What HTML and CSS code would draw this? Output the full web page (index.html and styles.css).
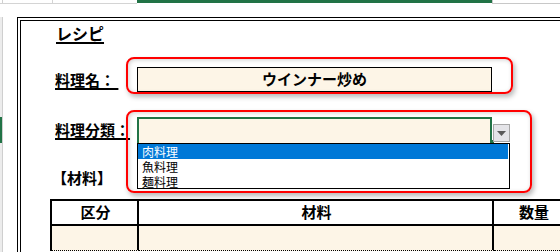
FILE: index.html
```html
<!DOCTYPE html>
<html lang="ja">
<head>
<meta charset="utf-8">
<link rel="stylesheet" href="styles.css">
</head>
<body>
<div class="sheet">
  <div class="top"><span class="t1"></span><span class="t2"></span><span class="t3"></span></div>
  <div class="middle">
    <div class="gutter"><span class="rowsel"></span></div>
    <div class="frame">
      <div class="title"><span class="ul">レシピ</span></div>

      <div class="frow r1">
        <div class="label"><span class="ul">料理名：&nbsp;</span></div>
        <div class="cell name">ウインナー炒め</div>
      </div>

      <div class="frow r2">
        <div class="label"><span class="ul">料理分類：</span></div>
        <div class="cell cat">
          <span class="handle"></span>
          <span class="ddbtn"><svg width="9" height="5" viewBox="0 0 9 5"><path d="M0 0H9L4.5 5Z" fill="#595959"/></svg></span>
          <ul class="list">
            <li class="on">肉料理</li>
            <li>魚料理</li>
            <li>麺料理</li>
          </ul>
        </div>
      </div>

      <div class="section">【材料】</div>

      <div class="tbl">
        <div class="th">区分</div>
        <div class="th">材料</div>
        <div class="th">数量</div>
        <div class="td"></div>
        <div class="td"></div>
        <div class="td"></div>
      </div>

      <div class="callout c1"></div>
      <div class="callout c2"></div>
    </div>
  </div>
</div>
</body>
</html>
```

FILE: styles.css
```css
* { box-sizing: border-box; }
html, body { margin: 0; padding: 0; background: #fff; }
body {
  width: 560px;
  height: 252px;
  overflow: hidden;
  font-family: "Noto Sans CJK JP", "Noto Sans", sans-serif;
  color: #000;
}
.sheet { width: 560px; height: 252px; overflow: hidden; }

.top { display: flex; height: 17px; }
.t1 {
  width: 137px; height: 4px;
  border-bottom: 1px solid #d4d4d4;
  background: linear-gradient(to right, transparent 2px, #d0d0d0 2px, #d0d0d0 3px, transparent 3px, transparent 52px, #d4d4d4 52px, #d4d4d4 53px, transparent 53px);
}
.t2 { width: 355px; height: 3px; background: #217346; }
.t3 { flex: 1; height: 4px; border-bottom: 1px solid #c8c8c8; border-left: 1px solid #c8c8c8; }

.middle { display: flex; height: 235px; }
.gutter {
  width: 17px; flex: none;
  background: linear-gradient(to right, #ececec 2px, #cfcfcf 2px, #cfcfcf 3px, transparent 3px);
}
.rowsel { display: block; width: 2px; height: 26px; margin-top: 100px; background: #217346; }

.frame {
  position: relative;
  width: 560px; flex: none;
  border-top: 4px double #000;
  border-left: 4px double #000;
  display: flex;
  flex-direction: column;
}

.ul { text-decoration: underline; text-decoration-thickness: 1.5px; text-underline-offset: 2px; }

.title {
  margin: 2px 0 0 35px;
  height: 20px;
  line-height: 20px;
  font-size: 16px;
  font-weight: 700;
}

.frow { display: flex; align-items: flex-end; height: 26px; }
.r1 { margin-top: 24px; }
.r2 { margin-top: 24px; }
.label {
  width: 116px;
  padding-left: 34px;
  font-size: 15px;
  font-weight: 700;
  line-height: 20px;
  margin-bottom: 3px;
  white-space: nowrap;
}
.cell {
  width: 355px;
  height: 26px;
  background: #fdf5e7;
  font-size: 15px;
  font-weight: 700;
  line-height: 22px;
  text-align: center;
}
.name { border: 1px solid #000; border-bottom-width: 2px; }
.cat { position: relative; border: 2px solid #217346; border-bottom: none; }

.handle { position: absolute; right: -4px; bottom: -1px; width: 4px; height: 4px; background: #217346; }
.ddbtn {
  position: absolute; left: 354px; top: 5px;
  width: 17px; height: 18px;
  background: #e4e4e8;
  border: 1px solid #a6a6a6;
  display: flex; align-items: center; justify-content: center;
}
.list {
  position: absolute; left: -2px; top: 24px;
  width: 373px; height: 46px;
  margin: 0; padding: 0;
  list-style: none;
  background: #fff;
  border: 1px solid #000;
  font-size: 12px;
  font-weight: 400;
  text-align: left;
  z-index: 2;
}
.list li { height: 15px; line-height: 15px; padding-left: 4px; margin-right: 1px; }
.list li.on { background: #0078d7; color: #fff; }

.section {
  margin: 25px 0 0 31px;
  height: 20px;
  line-height: 20px;
  font-size: 15px;
  font-weight: 700;
}

.tbl {
  margin: 11px 0 0 29px;
  display: grid;
  grid-template-columns: 87px 355px 80px;
  border-left: 2px solid #000;
  border-top: 2px solid #000;
  width: 524px;
}
.th {
  height: 25px;
  border-right: 2px solid #000;
  border-bottom: 2px solid #000;
  font-size: 15px;
  font-weight: 700;
  line-height: 22px;
  text-align: center;
  padding-left: 2px;
}
.td {
  height: 25px;
  background: #fdf5e7;
  border-right: 2px solid #000;
  border-bottom: 1px dotted #000;
}

.callout {
  position: absolute;
  border: 2px solid #f00;
  border-radius: 8px;
  box-shadow: 2px 3px 5px rgba(0,0,0,0.28), inset 1px 1px 4px rgba(0,0,0,0.18);
  z-index: 1;
}
.c1 { left: 105px; top: 36px; width: 387px; height: 37px; }
.c2 { left: 105px; top: 89px; width: 406px; height: 83px; }
```
